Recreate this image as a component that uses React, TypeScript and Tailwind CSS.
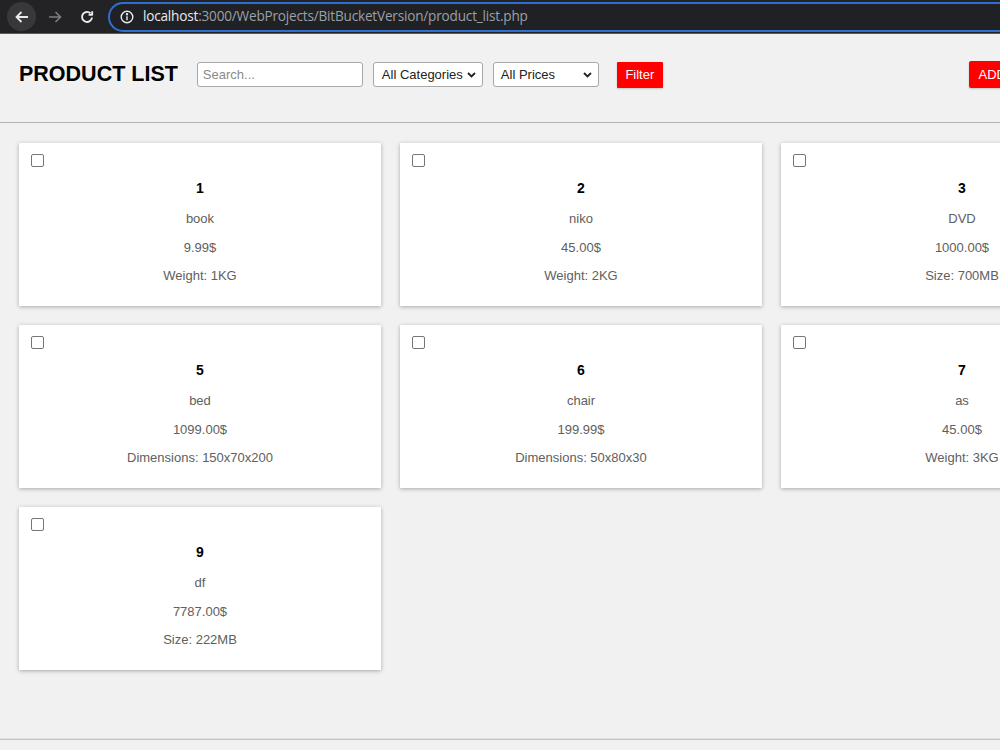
import React from 'react';

const products = [
  { id: 1, name: 'book', price: '9.99$', attr: 'Weight: 1KG' },
  { id: 2, name: 'niko', price: '45.00$', attr: 'Weight: 2KG' },
  { id: 3, name: 'DVD', price: '1000.00$', attr: 'Size: 700MB' },
  { id: 5, name: 'bed', price: '1099.00$', attr: 'Dimensions: 150x70x200' },
  { id: 6, name: 'chair', price: '199.99$', attr: 'Dimensions: 50x80x30' },
  { id: 7, name: 'as', price: '45.00$', attr: 'Weight: 3KG' },
  { id: 9, name: 'df', price: '7787.00$', attr: 'Size: 222MB' },
];

function Chevron() {
  return (
    <svg width="9" height="6" viewBox="0 0 9 6" fill="none">
      <path d="M1 1l3.5 3.5L8 1" stroke="#222" strokeWidth="1.8" />
    </svg>
  );
}

function BrowserBar() {
  return (
    <div className="h-[34px] bg-[#232326] border-b border-[#5a5a5e] flex items-center shrink-0">
      <div className="ml-[7px] w-[29px] h-[29px] rounded-full bg-[#38383b] flex items-center justify-center">
        <svg width="16" height="16" viewBox="0 0 16 16" fill="none" stroke="#e8eaed" strokeWidth="1.8">
          <path d="M14 8H2.5M7.5 3L2.5 8l5 5" />
        </svg>
      </div>
      <div className="ml-[11px] w-[16px] flex items-center justify-center">
        <svg width="16" height="16" viewBox="0 0 16 16" fill="none" stroke="#7c7e82" strokeWidth="1.6">
          <path d="M2 8h11.5M8.5 3l5 5-5 5" />
        </svg>
      </div>
      <div className="ml-[16px] w-[16px] flex items-center justify-center">
        <svg width="16" height="16" viewBox="0 0 16 16" fill="none" stroke="#e8eaed" strokeWidth="1.9">
          <path d="M13 8.5A5 5 0 1 1 11.5 4.3" />
          <path d="M13.2 2.2v3.6H9.6" strokeLinejoin="round" />
        </svg>
      </div>
      <div className="ml-[13px] h-[30px] flex-1 rounded-l-full border-2 border-r-0 border-[#2f6fcf] bg-[#202124] flex items-center pl-[10px]">
        <svg width="14" height="14" viewBox="0 0 14 14" fill="none" stroke="#e8eaed" strokeWidth="1.4">
          <circle cx="7" cy="7" r="5.8" />
          <path d="M7 6.2v4" />
          <circle cx="7" cy="4.2" r="0.5" fill="#e8eaed" />
        </svg>
        <span className="ml-[9px] whitespace-nowrap text-[13.6px] font-['Open_Sans','Liberation_Sans',sans-serif] tracking-[-0.2px]">
          <span className="text-[#e8eaed]">localhost</span>
          <span className="text-[#9aa0a6]">:3000/WebProjects/BitBucketVersion/product_list.php</span>
        </span>
      </div>
    </div>
  );
}

function Card({ p }: { p: (typeof products)[number] }) {
  return (
    <div className="w-[362px] h-[163px] shrink-0 bg-white shadow-[0_1px_4px_rgba(0,0,0,0.3)] px-3 pt-[11px]">
      <div className="w-[13px] h-[13px] border border-[#767676] rounded-[2px] bg-white" />
      <div className="flex flex-col items-center">
        <p className="mt-[13px] leading-4 text-[14px] font-bold text-black">{p.id}</p>
        <p className="mt-[15px] leading-4 text-[13px] text-[#606060]">{p.name}</p>
        <p className="mt-[13px] leading-4 text-[13px] text-[#606060]">{p.price}</p>
        <p className="mt-[12px] leading-4 text-[13px] text-[#606060]">{p.attr}</p>
      </div>
    </div>
  );
}

export default function App() {
  return (
    <div className="w-[1000px] h-[750px] overflow-hidden flex flex-col bg-[#f1f1f1] font-['Liberation_Sans',Arial,sans-serif]">
      <BrowserBar />
      <div className="w-[1160px] flex-1 flex flex-col">
        <header className="flex items-center pl-[19px] pr-5 pt-[27px] pb-[34px] border-b border-[#b4b4b4]">
          <h1 className="text-[21.5px] font-bold text-black leading-none">PRODUCT LIST</h1>
          <div className="ml-[19px] w-[166px] h-[25px] border border-[#a8a8a8] rounded-[3px] bg-white flex items-center px-[5px] text-[13px] text-[#8a8a8a]">
            Search...
          </div>
          <div className="ml-[10px] w-[110px] h-[25px] border border-[#a8a8a8] rounded-[3px] bg-white flex items-center justify-between pl-[8px] pr-[6px] text-[13px] text-[#222] whitespace-nowrap">
            All Categories
            <Chevron />
          </div>
          <div className="ml-[10px] w-[106px] h-[25px] border border-[#a8a8a8] rounded-[3px] bg-white flex items-center justify-between pl-[7px] pr-[6px] text-[13px] text-[#222] whitespace-nowrap">
            All Prices
            <Chevron />
          </div>
          <button className="ml-[18px] w-[46px] h-[26px] bg-[#ff0000] text-white text-[13px] rounded-[1px] shadow-[0_1px_2px_rgba(0,0,0,0.2)]">
            Filter
          </button>
          <div className="flex-1" />
          <button className="mr-[124px] h-[27px] px-[10px] bg-[#ff0000] text-white text-[13px] rounded-[2px] shadow-[0_1px_2px_rgba(0,0,0,0.2)]">
            ADD
          </button>
        </header>
        <main className="flex-1 pl-[19px] pt-[20px]">
          <div className="grid grid-cols-[362px_362px_362px] gap-x-[19px] gap-y-[19px]">
            {products.map((p) => (
              <Card key={p.id} p={p} />
            ))}
          </div>
        </main>
        <footer className="h-[11px] border-t border-[#c4c4c4] shadow-[0_-1px_0_#e0e0e0]" />
      </div>
    </div>
  );
}
